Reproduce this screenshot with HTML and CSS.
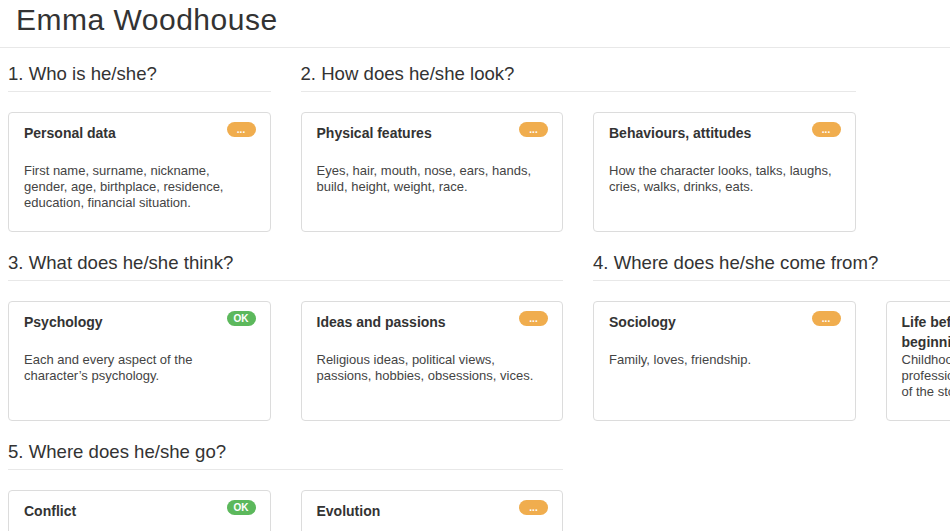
FILE: index.html
```html
<!DOCTYPE html>
<html lang="en">
<head>
<meta charset="utf-8">
<title>Emma Woodhouse</title>
<link rel="stylesheet" href="styles.css">
</head>
<body>
<header class="page-header">
  <h1 class="title">Emma Woodhouse</h1>
</header>
<main class="sections">
  <section class="group span-1">
    <h2 class="group-title">1. Who is he/she?</h2>
    <div class="cards">
      <article class="card">
        <h3 class="card-title">Personal data</h3>
        <span class="badge badge-pending">...</span>
        <p class="card-text">First name, surname, nickname, gender, age, birthplace, residence, education, financial situation.</p>
      </article>
    </div>
  </section>
  <section class="group span-2">
    <h2 class="group-title">2. How does he/she look?</h2>
    <div class="cards">
      <article class="card">
        <h3 class="card-title">Physical features</h3>
        <span class="badge badge-pending">...</span>
        <p class="card-text">Eyes, hair, mouth, nose, ears, hands, build, height, weight, race.</p>
      </article>
      <article class="card">
        <h3 class="card-title">Behaviours, attitudes</h3>
        <span class="badge badge-pending">...</span>
        <p class="card-text">How the character looks, talks, laughs, cries, walks, drinks, eats.</p>
      </article>
    </div>
  </section>
  <section class="group span-2">
    <h2 class="group-title">3. What does he/she think?</h2>
    <div class="cards">
      <article class="card">
        <h3 class="card-title">Psychology</h3>
        <span class="badge badge-ok">OK</span>
        <p class="card-text">Each and every aspect of the character’s psychology.</p>
      </article>
      <article class="card">
        <h3 class="card-title">Ideas and passions</h3>
        <span class="badge badge-pending">...</span>
        <p class="card-text">Religious ideas, political views, passions, hobbies, obsessions, vices.</p>
      </article>
    </div>
  </section>
  <section class="group span-2">
    <h2 class="group-title">4. Where does he/she come from?</h2>
    <div class="cards">
      <article class="card">
        <h3 class="card-title">Sociology</h3>
        <span class="badge badge-pending">...</span>
        <p class="card-text">Family, loves, friendship.</p>
      </article>
      <article class="card">
        <h3 class="card-title">Life before the story’s beginning</h3>
        <span class="badge badge-pending">...</span>
        <p class="card-text">Childhood, adolescence, education,<br>profession, past events before the start<br>of the story.</p>
      </article>
    </div>
  </section>
  <section class="group span-2">
    <h2 class="group-title">5. Where does he/she go?</h2>
    <div class="cards">
      <article class="card">
        <h3 class="card-title">Conflict</h3>
        <span class="badge badge-ok">OK</span>
        <p class="card-text">What the character wants and what stands in the way.</p>
      </article>
      <article class="card">
        <h3 class="card-title">Evolution</h3>
        <span class="badge badge-pending">...</span>
        <p class="card-text">How the character changes during the story.</p>
      </article>
    </div>
  </section>
</main>
</body>
</html>
```
FILE: styles.css
```css
html, body {
  margin: 0;
  padding: 0;
  overflow: hidden;
  background: #fff;
}

body {
  font-family: "Liberation Sans", Arial, Helvetica, sans-serif;
  color: #333;
}

.page-header {
  padding: 3px 16px 11px;
  border-bottom: 1px solid #e8e8e8;
}

.title {
  margin: 0;
  font-size: 30px;
  line-height: 33px;
  font-weight: normal;
  letter-spacing: 0.5px;
  color: #333;
}

.sections {
  display: flex;
  flex-wrap: wrap;
  align-items: flex-start;
  column-gap: 30px;
  row-gap: 21px;
  width: 1170px;
  padding: 16px 8px 0;
}

.group.span-1 {
  width: 262.5px;
}

.group.span-2 {
  width: 555px;
}

.group-title {
  margin: 0 0 20px;
  padding-bottom: 7px;
  border-bottom: 1px solid #e8e8e8;
  font-size: 18.6px;
  line-height: 20px;
  font-weight: normal;
  color: #333;
}

.cards {
  display: flex;
  gap: 30px;
}

.card {
  position: relative;
  box-sizing: border-box;
  flex: none;
  width: 262.5px;
  height: 120px;
  padding: 10px 15px;
  border: 1px solid #dcdcdc;
  border-radius: 4px;
  background: #fff;
}

.card-title {
  margin: 0;
  height: 40px;
  padding-right: 44px;
  font-size: 14px;
  line-height: 20px;
  font-weight: bold;
  color: #333;
}

.card-text {
  margin: 0;
  font-size: 13px;
  line-height: 16px;
  color: #444;
}

.badge {
  position: absolute;
  top: 9px;
  right: 14px;
  box-sizing: border-box;
  min-width: 29px;
  height: 15px;
  padding: 0 6px;
  border-radius: 8px;
  color: #fff;
  font-size: 10px;
  font-weight: bold;
  line-height: 15px;
  text-align: center;
}

.badge-pending {
  background: #f0ad4e;
}

.badge-ok {
  background: #5cb85c;
}
```
